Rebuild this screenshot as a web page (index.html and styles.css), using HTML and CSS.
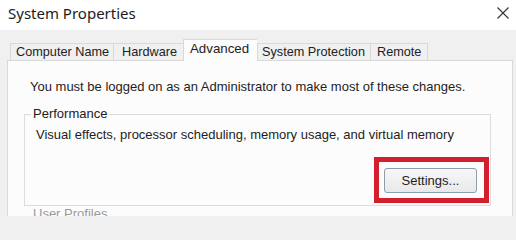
FILE: index.html
```html
<!DOCTYPE html>
<html>
<head>
<meta charset="utf-8">
<link rel="stylesheet" href="styles.css">
</head>
<body>
<div class="window">
  <div class="titlebar">
    <span class="title">System Properties</span>
    <span class="close">
      <svg width="12" height="12" viewBox="0 0 12 12"><path d="M0.5 0.5 L11.5 11.5 M11.5 0.5 L0.5 11.5" stroke="#333" stroke-width="1.1" fill="none"/></svg>
    </span>
  </div>
  <div class="tabs">
    <div class="tab t-comp">Computer Name</div>
    <div class="tab t-hw">Hardware</div>
    <div class="tab t-adv selected">Advanced</div>
    <div class="tab t-sp">System Protection</div>
    <div class="tab t-rem">Remote</div>
  </div>
  <div class="panel">
    <p class="admin">You must be logged on as an Administrator to make most of these changes.</p>
    <fieldset class="group">
      <legend>Performance</legend>
      <p class="desc">Visual effects, processor scheduling, memory usage, and virtual memory</p>
      <div class="actions">
        <div class="highlight"><button class="btn">Settings...</button></div>
      </div>
    </fieldset>
    <fieldset class="group next">
      <legend>User Profiles</legend>
    </fieldset>
  </div>
</div>
</body>
</html>
```
FILE: styles.css
```css
html, body {
  margin: 0;
  padding: 0;
  overflow: hidden;
}
body {
  background: #f0f0f0;
  font-family: "Liberation Sans", Arial, sans-serif;
  font-size: 13px;
  color: #1e1e1e;
}
.window {
  width: 516px;
  height: 216px;
  overflow: hidden;
  background: #f0f0f0;
}
.titlebar {
  height: 30px;
  background: #ffffff;
  display: flex;
  align-items: center;
  justify-content: space-between;
  padding: 0 7px 0 8px;
}
.title {
  font-family: "Noto Sans", "Open Sans", sans-serif;
  font-size: 15px;
  color: #1b1b1b;
  margin-top: -4px;
}
.close {
  display: flex;
  margin-top: -5px;
}
.tabs {
  display: flex;
  align-items: flex-end;
  height: 21px;
  margin-top: 9px;
  padding-left: 10px;
  position: relative;
  z-index: 1;
}
.tab {
  height: 17px;
  line-height: 17px;
  border: 1px solid #d9d9d9;
  border-bottom: none;
  border-right: none;
  background: #f0f0f0;
  padding-left: 5px;
  box-sizing: border-box;
  color: #222;
  font-size: 12.7px;
  white-space: nowrap;
}
.t-comp { width: 103px; }
.t-hw { width: 70px; padding-left: 8px; }
.t-adv { width: 74px; padding-left: 6px; }
.t-sp { width: 113px; padding-left: 4px; }
.t-rem { width: 58px; padding-left: 6px; border-right: 1px solid #d9d9d9; }
.tab.selected {
  height: 22px;
  line-height: 18px;
  background: #fcfcfc;
  margin-bottom: -1px;
  font-size: 13.3px;
}
.panel {
  margin-left: 7px;
  width: 504px;
  height: 200px;
  border: 1px solid #d9d9d9;
  background: #fcfcfc;
  padding-top: 18px;
}
.admin {
  margin: 0 0 0 22px;
  line-height: 15px;
}
.group {
  margin: 13px 21px 0 16px;
  padding: 6px 1px 2px 11px;
  border: 1px solid #dcdcdc;
}
.group legend {
  padding: 0 2px;
  margin-left: -5px;
  line-height: 14px;
  color: #222;
}
.desc {
  margin: 0;
  line-height: 15px;
}
.actions {
  display: flex;
  justify-content: flex-end;
  margin-top: 15px;
}
.highlight {
  border: 5px solid #d31f2d;
  padding: 6px 7px 5px 5px;
  background: #fcfcfc;
}
.btn {
  display: block;
  width: 93px;
  height: 25px;
  border: 1px solid #8c9fae;
  border-radius: 3px;
  background: linear-gradient(#f7f7f7, #e9e9e9);
  font-family: "Liberation Sans", Arial, sans-serif;
  font-size: 13px;
  color: #1e1e1e;
  padding: 0;
}
.group.next {
  margin-top: 1px;
  border-color: transparent;
}
.group.next legend {
  color: #9a9a9a;
}
```
